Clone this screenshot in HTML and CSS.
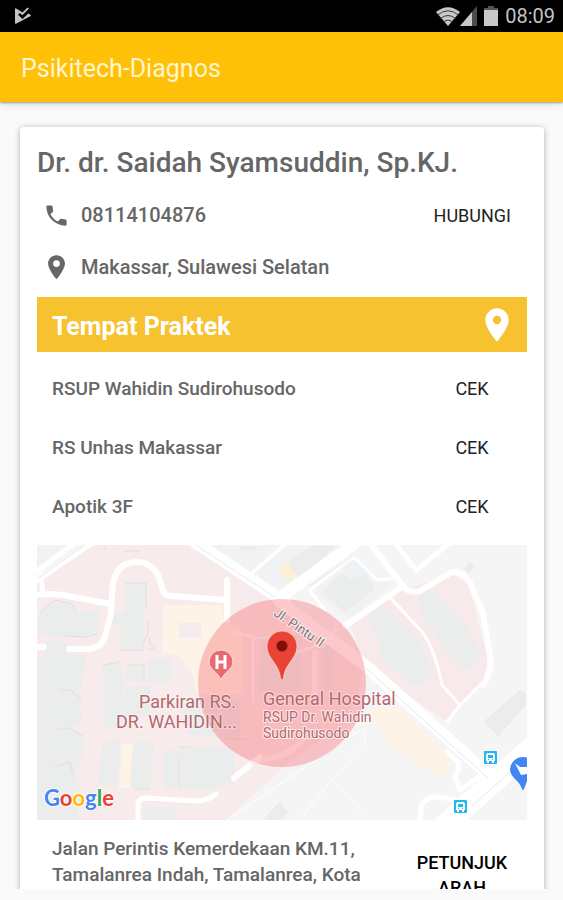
FILE: index.html
```html
<!DOCTYPE html>
<html lang="id">
<head>
<meta charset="utf-8">
<meta name="viewport" content="width=device-width, initial-scale=1">
<title>Psikitech-Diagnos</title>
<link rel="stylesheet" href="styles.css">
</head>
<body>
<div class="status-bar">
  <svg class="status-play" viewBox="0 0 18 18" aria-hidden="true">
    <path d="M2 1.5Q1 1 1 2.2V15.8Q1 17.2 2.4 16.5L16.3 9.3Q17.4 8.5 16.3 7.6L14.2 6.400L8.600 12L4 7.800L5.800 6L8.400 8.300L13 3.500L15 1.500L13.500 0.500L8.400 5.500L6 3.800Z" fill="#c4c4c4"/>
  </svg>
  <div class="status-icons">
    <svg class="status-wifi" viewBox="0 0 24 19" aria-hidden="true">
      <path d="M0 5Q12 -4.500 24 5L12 19Z" fill="#c8c8c8"/>
      <path d="M1.500 8Q12 -0.500 22.500 8M4.500 11.500Q12 5.500 19.500 11.500M7.500 14.500Q12 11.500 16.500 14.500" fill="none" stroke="#333" stroke-width="1"/>
    </svg>
    <svg class="status-signal" viewBox="0 0 17 20" aria-hidden="true">
      <path d="M17 0V20H0Z" fill="#4b4b4b"/>
      <path d="M12 6V20H0Z" fill="#c8c8c8"/>
    </svg>
    <svg class="status-battery" viewBox="0 0 14 20" aria-hidden="true">
      <path d="M4 0H10V2H14V6H0V2H4Z" fill="#555"/>
      <path d="M0 4H14V20H0Z" fill="#c8c8c8"/>
    </svg>
    <span>08:09</span>
  </div>
</div>
<header class="app-bar"><h1>Psikitech-Diagnos</h1></header>
<main class="scroll">
  <article class="card">
    <h2 class="name">Dr. dr. Saidah Syamsuddin, Sp.KJ.</h2>
    <div class="contact">
      <svg viewBox="0 0 24 24" aria-hidden="true"><path fill="#666" d="M6.620 10.790c1.440 2.830 3.760 5.140 6.590 6.590l2.200-2.200c.27-.27.67-.36 1.020-.24 1.120.37 2.330.57 3.570.57.55 0 1 .45 1 1V20c0 .55-.45 1-1 1-9.390 0-17-7.610-17-17 0-.55.45-1 1-1h3.500c.55 0 1 .45 1 1 0 1.250.2 2.450.57 3.570.11.35.03.74-.25 1.020l-2.200 2.200z"/></svg>
      <span>08114104876</span>
      <button class="action" type="button">HUBUNGI</button>
    </div>
    <div class="contact">
      <svg viewBox="0 0 24 24" aria-hidden="true"><path fill="#666" d="M12 1C7.600 1 4.500 4.400 4.500 8.500c0 5.500 7.500 14 7.500 14s7.500-8.500 7.500-14C19.500 4.400 16.400 1 12 1zm0 10.500a3 3 0 0 1 0-6 3 3 0 0 1 0 6z"/></svg>
      <span>Makassar, Sulawesi Selatan</span>
    </div>
    <div class="banner">
      <h3>Tempat Praktek</h3>
      <svg viewBox="0 0 24 24" aria-hidden="true"><path fill="#fff" d="M12 2C8.130 2 5 5.130 5 9c0 5.250 7 13 7 13s7-7.750 7-13c0-3.870-3.130-7-7-7zm0 9.500a2.500 2.500 0 0 1 0-5 2.500 2.500 0 0 1 0 5z"/></svg>
    </div>
    <ul class="places">
      <li><span>RSUP Wahidin Sudirohusodo</span><button class="action" type="button">CEK</button></li>
      <li><span>RS Unhas Makassar</span><button class="action" type="button">CEK</button></li>
      <li><span>Apotik 3F</span><button class="action" type="button">CEK</button></li>
    </ul>
    <svg class="map" viewBox="37 545 490 275" role="img" aria-label="General Hospital">
      <rect x="37" y="545" width="490" height="275" fill="#f5f5f5"/>
      <!-- hospital grounds -->
      <path fill="#f7ebeb" d="M37 585L90 545H190L280 605L365 665L350 720L285 765L227 820H37Z"/>
      <path fill="#f8eaea" d="M350 625L400 590L453 575L468 583L490 665L483 685L460 705L447 722L365 665Z"/>
      <path fill="#f0f2f3" d="M37 545H72L37 568ZM208 545H275L248 574ZM252 575L283 548H345L282 592ZM313 591L353 561L380 582H392L350 620Z"/>
      <path fill="#eef2f5" d="M344 567L357 558L372 574L352 582Z"/>
      <!-- commercial blocks -->
      <path fill="#fdf4e7" d="M163 605H223V620L243 630V694H197L192 672L178 656L162 652Z"/>
      <path fill="#fdf4e7" d="M368 708H397L447 753L453 770L440 777L387 745ZM122 744H133L129 788H119Z"/>
      <path fill="#fdeed6" d="M279 571L285 561L296 573L288 583Z"/>
      <!-- buildings -->
      <g fill="#ebecec">
        <path d="M125 583H146V607H144V650H121V625H109V612H125ZM40 613L55 600L72 604L76 612L100 611L97 634L87 637L38 635Z"/>
        <path d="M46 642L58 640L68 644L67 655H86L82 680L80 700L82 722L70 728L83 736V758L74 778L82 790L77 820H37V658H45Z"/>
        <path d="M103 665L120 662L124 678V725L103 727ZM127 665H144V682L126 680ZM148 660H171V683H146Z"/>
        <path d="M126 686H150V716H124ZM103 742L120 740L118 786L98 785ZM134 741H154L150 789H131ZM164 750H179V747H236L233 780L217 789H164ZM146 807L175 807V820H143ZM263 820L280 801L288 812L282 820ZM185 700H240V739L190 735Z"/>
        <path d="M288 562L312 546H335L300 580ZM322 592L342 573L350 580L365 574L375 588L345 613ZM367 616L383 603L420 641L433 672L428 680L412 685L382 660L377 637ZM418 596L435 588L445 602L464 622L480 656L475 666L461 668L448 655L423 617ZM464 569L470 562L476 567L468 573ZM484 721L520 690L526 693V705L498 737ZM37 802L47 815L37 820ZM262 635H302V692H258ZM322 645H334V690H322Z"/>
        <path fill="#f4ecec" d="M179 623H201V638H179Z"/>
      </g>
      <g fill="none" stroke="#e0e0e0" stroke-width="1">
        <path d="M125 583H146V607M144 650H121M40 613L55 600L72 604L76 612M97 634L87 637L65 636M148 620V633L142 645M150 637V645H154V649H147M127 665H144V682M103 665L120 662M60 690H70L82 700M56 730L70 728L83 736M54 767L70 762L73 775M179 747H190M179 759V788M134 789H150M105 550V547M125 551H140M240 548H257M210 724H225M225 739H245"/>
      </g>
      <g fill="none" stroke="#fff" stroke-linejoin="round" stroke-linecap="round">
        <path stroke-width="5" d="M33 574L76 542M33 583L94 542M41 574L43 595"/>
        <path stroke-width="6" d="M35 595L50 594Q60 594 73 597L111 604M37 647H44M69 649H88Q102 648 105 636L109 622Q112 612 112 593Q113 562 137 562Q157 562 162 588Q165 597 172 596L227 600M227 580V620"/>
        <path stroke-width="12" d="M192 540L285 602"/>
        <path stroke-width="12" d="M358 541L278 599"/>
        <path stroke-width="3" d="M283 546L250 575M310 590L350 559Q354 557 358 561L377 580L393 578M310 591L325 610M388 595L423 633Q435 650 442 685L460 705L447 722M460 705L485 680"/>
        <path stroke-width="6" d="M370 543L403 586Q410 594 420 591L450 573Q462 569 470 583L483 613L490 655Q492 673 483 685M403 586L345 626"/>
        <path stroke-width="5" d="M395 543L416 570L450 543"/>
        <path stroke-width="12" d="M280 602L365 665L400 696L490 776"/>
        <path stroke-width="22" d="M540 740L442 828"/>
        <path stroke-width="5" d="M138 822V805Q138 798 147 798L195 801Q208 801 216 794M420 822L421 807Q424 796 440 797L455 800M447 752L458 762Q460 768 455 777L460 790L480 776M502 775L532 735"/>
        <path stroke-width="6" d="M234 778L260 757"/>
        <path stroke-width="1" d="M227 820L360 730M295 825L332 780L364 745Q367 738 362 730M332 780L370 820"/>
      </g>
      <path fill="none" stroke="#e8e8e8" stroke-width="1" d="M37 579L85 545M196 545L276 598M366 668L400 699L488 778M527 757L472 806M310 586L352 557"/>
      <!-- selected radius -->
      <circle cx="282" cy="683" r="84" fill="#fa4e57" fill-opacity=".31"/>
      <g fill="none" stroke="#ffd3d3" stroke-opacity=".4">
        <path stroke-width="3" d="M234 632L258 638Q275 638 290 634M253 638V703M290 655L315 646L320 636M337 628L322 648"/>
        <path stroke-width="6" d="M315 650V695M250 763L280 756Q295 750 308 735"/>
      </g>
      <path id="street" d="M273 615L324 650" fill="none"/>
      <text class="map-street"><textPath href="#street">Jl. Pintu II</textPath></text>
      <!-- hospital marker -->
      <path fill="#e96b71" stroke="#fbdcdc" stroke-width="1" d="M221 650a12 12 0 0 0-12 12c0 7 9 10 12 18 3-8 12-11 12-18a12 12 0 0 0-12-12z"/>
      <path fill="none" stroke="#fff" stroke-width="3" d="M217 655V669M225 655V669M217 662H225"/>
      <!-- place pin -->
      <path fill="#ea4335" stroke="#fff" stroke-opacity=".5" stroke-width="1" d="M282 631a15 15 0 0 0-15 15c0 13 12 17 13.500 32q1.500 4 3 0C285 663 297 659 297 646a15 15 0 0 0-15-15z"/>
      <circle cx="282" cy="646" r="5.500" fill="#7d100c"/>
      <text class="map-label" x="236" y="708" text-anchor="end">Parkiran RS.</text>
      <text class="map-label" x="237" y="728" text-anchor="end">DR. WAHIDIN...</text>
      <text class="map-label" x="263" y="705">General Hospital</text>
      <text class="map-small" x="263" y="722">RSUP Dr. Wahidin</text>
      <text class="map-small" x="263" y="738">Sudirohusodo</text>
      <!-- bus stops -->
      <g id="stop">
        <rect x="484" y="751" width="13" height="13" rx="1" fill="#20b7f2"/>
        <path fill="#fff" d="M487 753H494L495 755V761H494V763H492V761H489V763H487V761H486V755Z"/>
        <path fill="#20b7f2" d="M488 755H493V758H488ZM488 759H489V760H488ZM492 759H493V760H492Z"/>
      </g>
      <use href="#stop" x="-30" y="49"/>
      <path fill="#4285f4" d="M523 757a13 13 0 0 0-13 12c0 9 9 10 12 20q1 2 2 0l3-8V757.500z"/>
      <path fill="#fff" d="M515 763L520 767H527V774L521 775Z"/>
      <text class="map-logo" x="44" y="806"><tspan fill="#4285f4">G</tspan><tspan fill="#ea4335">o</tspan><tspan fill="#fbbc05">o</tspan><tspan fill="#4285f4">g</tspan><tspan fill="#34a853">l</tspan><tspan fill="#ea4335">e</tspan></text>
    </svg>
    <div class="address">
      <p>Jalan Perintis Kemerdekaan KM.11, Tamalanrea Indah, Tamalanrea, Kota</p>
      <button class="action directions" type="button">PETUNJUK ARAH</button>
    </div>
  </article>
</main>
</body>
</html>
```
FILE: styles.css
```css
* { box-sizing: border-box; }

body {
  margin: 0;
  height: 100vh;
  display: flex;
  flex-direction: column;
  overflow: hidden;
  background: #fafafa;
  color: #666;
  font-family: Roboto, "Liberation Sans", sans-serif;
}

h1, h2, h3, p, ul { margin: 0; padding: 0; }

.status-bar {
  flex: none;
  height: 32px;
  padding: 0 8px 0 14px;
  display: flex;
  align-items: center;
  justify-content: space-between;
  background: #000;
  color: #c4c4c4;
  font-size: 20px;
}
.status-icons { display: flex; align-items: center; }
.status-play { width: 18px; height: 18px; }
.status-wifi { width: 24px; height: 19px; }
.status-signal { width: 17px; height: 20px; }
.status-battery { width: 14px; height: 20px; margin: 0 7px; }

.app-bar {
  flex: none;
  position: relative;
  height: 70px;
  padding: 2px 21px 0;
  display: flex;
  align-items: center;
  background: #ffc107;
  box-shadow: 0 1px 2px rgba(0, 0, 0, .35), 0 4px 8px rgba(0, 0, 0, .08);
}
.app-bar h1 {
  color: #fff5d0;
  font-size: 25px;
  font-weight: 400;
}

.scroll {
  flex: 1;
  min-height: 0;
  margin-bottom: 11px;
  padding: 25px 19px 0 20px;
  overflow: hidden;
}

.card {
  padding: 16px 17px;
  border-radius: 4px;
  background: #fff;
  box-shadow: 0 1px 6px rgba(0, 0, 0, .3);
}

.name {
  font-size: 28px;
  font-weight: 500;
  line-height: 40px;
  margin-bottom: 6px;
}

.contact {
  height: 52px;
  padding: 0 16px 0 6px;
  display: flex;
  align-items: center;
  gap: 11px;
  font-size: 20px;
  font-weight: 500;
}
.contact svg { width: 27px; height: 27px; }
.contact .action { margin-left: auto; }

.action {
  padding: 0;
  border: 0;
  background: none;
  color: #222;
  font: 400 18px/25px Roboto, "Liberation Sans", sans-serif;
}

.banner {
  height: 55px;
  margin: 4px 0 7px;
  padding: 0 10px 0 15px;
  display: flex;
  align-items: center;
  justify-content: space-between;
  background: #f6c22f;
  color: #fff;
}
.banner h3 { padding-top: 4px; font-size: 25px; font-weight: 700; line-height: 30px; }
.banner svg { width: 40px; height: 40px; }

.places { list-style: none; }
.places li {
  height: 59px;
  padding: 0 0 0 15px;
  display: flex;
  align-items: center;
  justify-content: space-between;
  font-size: 19px;
  font-weight: 500;
}
.places .action { width: 110px; }

.map {
  display: block;
  width: 100%;
  height: auto;
  margin-top: 9px;
}
.map-label, .map-small {
  fill: #b5676e;
  stroke: #fff;
  stroke-opacity: .4;
  stroke-width: 2px;
  paint-order: stroke;
  font-size: 18px;
}
.map-small { font-size: 14px; stroke-opacity: .7; }
.map-street {
  fill: #777;
  stroke: #fff;
  stroke-opacity: .7;
  stroke-width: 2px;
  paint-order: stroke;
  font-size: 13px;
}
.map-logo {
  font-family: Lato, Roboto, sans-serif;
  font-size: 22px;
  font-weight: 700;
  stroke: #fff;
  stroke-width: 2px;
  paint-order: stroke;
}

.address {
  padding: 16px 0 0 15px;
  display: flex;
  justify-content: space-between;
  font-size: 19px;
  font-weight: 500;
  line-height: 26px;
}
.address p { width: 320px; }
.directions {
  width: 130px;
  padding-top: 14px;
  color: #000;
  font-weight: 500;
}
```
